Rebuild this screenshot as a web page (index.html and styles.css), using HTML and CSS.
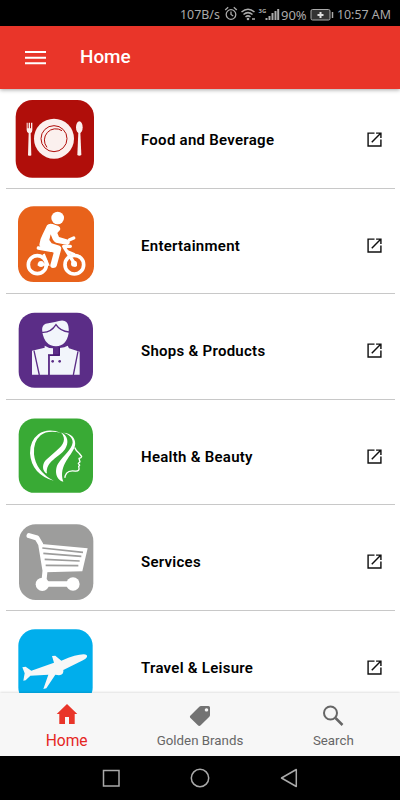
FILE: index.html
```
<!DOCTYPE html>
<html lang="en">
<head>
<meta charset="utf-8">
<title>Home</title>
<link rel="stylesheet" href="styles.css">
</head>
<body>
<svg class="defs" width="0" height="0">
  <symbol id="open" viewBox="0 0 24 24"><path d="M19.200 19.200H4.800V4.800H12V3H3v18h18v-9h-1.800zM14 3v1.800h3.900l-10 10 1.300 1.300L19.200 6.100V10H21V3z"/></symbol>
</svg>
<div class="screen">
  <div class="status">
    <span class="rate">107B/s</span>
    <svg class="status-icons" viewBox="0 0 56 20" width="56" height="20" fill="none" stroke="#aaa">
      <circle cx="7" cy="10.5" r="4.8" stroke-width="1.3"/><path d="M7 7.5v3l2.200 1.500M1.200 6l3-2.700M12.800 6l-3-2.700" stroke-width="1.300"/>
      <path d="M17.500 8q6.500-5.500 13 0M19.500 10.500q4.500-3.800 9 0M21.500 13q2.500-2.200 5 0" stroke-width="1.500"/><circle cx="24" cy="15" r="1.300" fill="#aaa" stroke="none"/><path d="M28 15h3" stroke-width="1.500"/>
      <path d="M42.500 16v-2M45.500 16v-4M48.500 16v-7M51.500 16v-9M54.200 16v-11" stroke-width="2"/>
      <text x="34.500" y="9" class="net">3G</text>
    </svg>
    <span class="percent">90%</span>
    <svg class="battery" viewBox="0 0 24 14" width="24" height="14" fill="none" stroke="#aaa"><rect x="1" y="1.500" width="19" height="10.500" rx="1.500" fill="#333"/><path d="M22.500 4v6" stroke-width="1.500"/><path d="M7.500 7h6M10.500 4v6" stroke="#ddd" stroke-width="2"/></svg>
    <span class="clock">10:57 AM</span>
  </div>
  <header class="appbar">
    <svg width="21" height="16" viewBox="0 0 21 16" fill="#fff"><path d="M0 1h21v2H0zM0 6.700h21v2H0zM0 12.300h21v2H0z"/></svg>
    <h1>Home</h1>
  </header>
  <main class="list">
    <div class="row">
      <svg class="tile" viewBox="0 15 285 270"><rect x="32" y="30" width="235" height="233" rx="50" fill="#b00e0a"/>
        <g fill="#fbf0ee"><circle cx="147" cy="146" r="60"/><path d="M65 98h3v17h3V98h4v17h3V98h4v22q0 7-5 10l2 66q-5 3-10 0l2-66q-6-3-6-10z"/><ellipse cx="223" cy="112" rx="10" ry="18"/><path d="M220 126h6l3 69q-6 4-12 0z"/></g>
        <g fill="none" stroke="#b00e0a"><circle cx="147" cy="146" r="39" stroke-width="3"/><path d="M126 172A34 34 0 0 1 171 122" stroke-width="3"/></g></svg>
      <span class="name">Food and Beverage</span><svg class="open"><use href="#open"/></svg>
    </div>
    <div class="row">
      <svg class="tile" viewBox="0 16 285 270"><rect x="39" y="35" width="228" height="227" rx="47" fill="#e8621b"/>
        <g fill="#fff"><circle cx="158" cy="70" r="19"/><path d="M126 92Q131 85 143 88L160 94Q168 98 165 106L157 115 162 127 190 135Q197 139 193 147L188 151 153 144Q146 141 143 134L137 119 133 136 140 146 164 153Q171 157 168 166L155 214Q153 220 144 220 135 220 136 211L146 174 118 162Q104 160 103 150 105 133 113 119z"/></g>
        <g fill="none" stroke="#fff"><circle cx="97" cy="210" r="27" stroke-width="11"/><circle cx="208" cy="210" r="28" stroke-width="11"/><path d="M100 160l38 7M178 158l33 53M176 155h20M194 135l12-5" stroke-width="10" stroke-linecap="round"/><path d="M116 178l13 32H98M188 170l21 9" stroke-width="7"/></g><circle cx="108" cy="208" r="9" fill="#fff"/><circle cx="207" cy="207" r="9" fill="#fff"/></svg>
      <span class="name">Entertainment</span><svg class="open"><use href="#open"/></svg>
    </div>
    <div class="row">
      <svg class="tile" viewBox="0 18 285 270"><rect x="41" y="38" width="223" height="225" rx="48" fill="#5b2d87"/>
        <path d="M112 97Q108 77 122 71L150 66Q176 57 184 66 193 75 191 99 185 137 153 139 119 138 112 97zM119 137q12 8 25 8v20h-14v59H81V152l38-9zM188 137l4 8 32 10v69h-91v-56h31v-24q16-2 24-7z" fill="#f2f5fb"/><path d="M111 97q26 2 42-23 13 20 39 22M87 152l16 73M219 154l-14 71" fill="none" stroke="#5b2d87" stroke-width="4"/><path d="M129 165h34v-24" fill="none" stroke="#451873" stroke-width="4"/><path d="M132 166v59" stroke="#5b2d87" stroke-width="5"/><circle cx="143" cy="184" r="4" fill="#5b2d87"/><circle cx="164" cy="184" r="4" fill="#5b2d87"/></svg>
      <span class="name">Shops &amp; Products</span><svg class="open"><use href="#open"/></svg>
    </div>
    <div class="row">
      <svg class="tile" viewBox="0 18.500 285 270"><rect x="41" y="41" width="223" height="223" rx="48" fill="#39aa35"/>
        <g fill="#fff"><path d="M168 84Q129 68 100 88 74 108 75 145 79 207 146 228 92 198 87 148 84 110 107 91 128 75 168 84z"/><path d="M168 83C190 92 192 115 180 133 165 155 120 170 126 206 112 200 110 180 122 166L155 137C176 120 185 102 168 83z"/><path d="M174 84C200 84 214 104 210 122 205 150 158 180 175 231 148 222 150 190 160 175 175 153 200 135 203 113 203 98 190 88 174 84z"/></g><path d="M209 128q4 11 14 18l7 9q0 4-8 6l3 10-5 5 4 5-3 4q5 15-10 14-19-3-26 6-6 9-5 14" fill="none" stroke="#fff" stroke-width="4" stroke-linejoin="round"/></svg>
      <span class="name">Health &amp; Beauty</span><svg class="open"><use href="#open"/></svg>
    </div>
    <div class="row">
      <svg class="tile" viewBox="0 15 285 270"><rect x="42" y="37" width="223" height="227" rx="50" fill="#9d9d9c"/>
        <path d="M72 71l24 7 11 19 13 79-3 30" fill="none" stroke="#fff" stroke-width="15" stroke-linecap="round" stroke-linejoin="round"/><path d="M102 95l146 14-16 69-112 3zM105 208h98v16h-98z" fill="#fff"/><circle cx="112" cy="217" r="20" fill="#fff"/><circle cx="204" cy="216" r="20" fill="#fff"/><path d="M112 108l122 13M115 124l114 9M119 142l105 5M122 160l98 1" stroke="#9d9d9c" stroke-width="5"/></svg>
      <span class="name">Services</span><svg class="open"><use href="#open"/></svg>
    </div>
    <div class="row">
      <svg class="tile" viewBox="15 36 285 270"><rect x="55" y="58" width="223" height="225" rx="50" fill="#00aeec"/>
        <path d="M67 172l10-2 17 12 68-24-6-20 10-1 18 15Q229 133 251 133q12 0 10 8-3 6-12 10l-59 29q2 14-13 16l-11-2-27 41-9 2 15-43-54 3-14 14-7 1 4-22z" fill="#f7f7f7"/></svg>
      <span class="name">Travel &amp; Leisure</span><svg class="open"><use href="#open"/></svg>
    </div>
  </main>
  <nav class="tabs">
    <div class="tab active"><svg viewBox="0 0 22 22" width="22" height="22"><path d="M11 1L.7 11h2.600v10H9v-7h4v7h5.700V11h2.600z"/></svg><span>Home</span></div>
    <div class="tab"><svg viewBox="0 0 22 22" width="22" height="22"><path fill-rule="evenodd" d="M12 2h7.500q1.500 0 1.500 1.500V11q0 1-.7 1.700l-8.600 8.600q-1.500 1.200-2.800 0L1.500 14q-1.200-1.400 0-2.600l8.800-8.700Q11 2 12 2zm5.500 2.200a1.700 1.700 0 1 0 .01 0z"/></svg><span>Golden Brands</span></div>
    <div class="tab"><svg viewBox="0 0 22 22" width="22" height="22" fill="none" stroke="#666"><circle cx="8.500" cy="9" r="6.500" stroke-width="2"/><path d="M13.500 14l7 7" stroke-width="2.500"/></svg><span>Search</span></div>
  </nav>
  <div class="system">
    <svg viewBox="0 0 18 18" width="18" height="18"><rect x="1.500" y="1.500" width="15.500" height="15.500"/></svg>
    <svg viewBox="0 0 20 20" width="20" height="20"><circle cx="10" cy="10" r="8.700"/></svg>
    <svg viewBox="0 0 18 20" width="18" height="20"><path d="M16.300 1.500v17L1.500 10z" stroke-linejoin="round"/></svg>
  </div>
</div>
</body>
</html>
```
FILE: styles.css
```
* { box-sizing: border-box; }
body { margin: 0; font-family: Roboto, sans-serif; background: #fff; }
svg { display: block; flex: none; }
.defs { position: absolute; }
.screen { width: 400px; height: 800px; display: flex; flex-direction: column; overflow: hidden; }
.status {
  height: 26px; flex: none; background: #000; color: #aaa;
  display: flex; align-items: center; padding: 3px 9px 0 180px;
  font: 12.4px/20px "Noto Sans", sans-serif; white-space: nowrap;
}
.rate { width: 44px; }
.status-icons { margin-top: -2px; }
.net { font: bold 6px "Noto Sans", sans-serif; fill: #aaa; stroke: none; }
.percent { width: 30px; padding-left: 1px; font-size: 13px; }
.battery { margin-right: 3px; }
.clock { margin-left: auto; }
.appbar {
  height: 63px; flex: none; background: #e93529; color: #fff; z-index: 1;
  display: flex; align-items: center; gap: 34px; padding-left: 25px;
  box-shadow: 0 1px 4px rgba(0, 0, 0, .35);
}
.appbar h1 { margin: -2px 0 0; font-size: 18.900px; font-weight: 500; line-height: 24px; }
.appbar svg { margin-top: 1px; }
.list { height: 604px; flex: none; overflow: hidden; padding: 0 5px; }
.row {
  height: 105.5px; display: flex; align-items: center;
  padding-top: 11.5px; padding-bottom: 3px; border-bottom: 1px solid #c8c8c8; margin-left: 1px;
}
.row:first-child { height: 99.8px; padding-top: 5.8px; }
.tile { width: 95px; height: 90px; margin-left: -1px; }
.name { flex: 1; padding: 1.4px 0 0 41px; font-size: 15px; letter-spacing: .27px; font-weight: 600; line-height: 20px; color: #000; }
.open { width: 19px; height: 19px; margin: 0 11px 0 0; fill: #111; }
.tabs {
  height: 63px; flex: none; background: #f7f7f7; z-index: 1;
  box-shadow: 0 -1px 2px rgba(0, 0, 0, .12); display: grid; grid-template-columns: repeat(3, 1fr);
}
.tab {
  display: flex; flex-direction: column; align-items: center; padding-top: 11px;
  gap: 6px; font-size: 13.300px; line-height: 18px; color: #666; fill: #737373;
}
.active { padding-top: 10px; gap: 7px; color: #e5261f; fill: #e93529; font-size: 15.600px; }
.system {
  flex: 1; background: #000; display: flex; align-items: center; justify-content: space-between;
  padding: 0 102px; fill: none; stroke: #aaa; stroke-width: 1.500;
}
```
